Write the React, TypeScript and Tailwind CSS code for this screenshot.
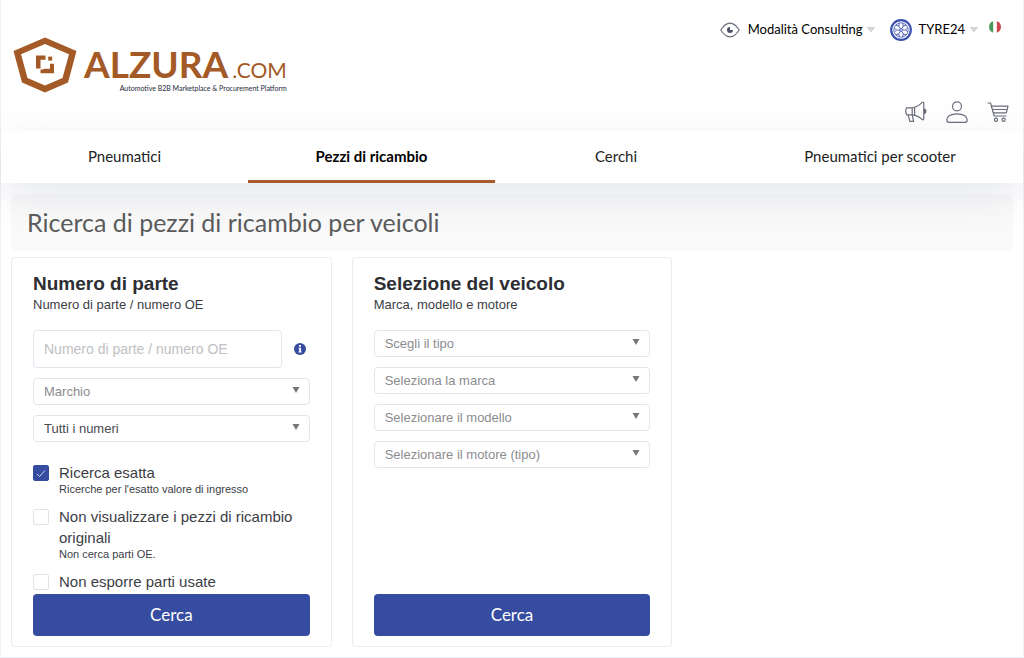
import React, { useState } from 'react';

const tabs = [
    { label: 'Pneumatici', active: false },
    { label: 'Pezzi di ricambio', active: true },
    { label: 'Cerchi', active: false },
    { label: 'Pneumatici per scooter', active: false },
];

const vehicleSelects = ['Scegli il tipo', 'Seleziona la marca', 'Selezionare il modello', 'Selezionare il motore (tipo)'];

function Logo() {
    return (
        <a href="#" className="flex items-start text-[#a35a26]">
            <svg viewBox="0 0 64 56" className="w-16 h-14 shrink-0" fill="currentColor">
                <path
                    fillRule="evenodd"
                    d="M32 0.5 L63.5 14 L55 45.5 L32 55.5 L9 45.5 L0.5 14 Z M32 7 L8 17.2 L14.5 41 L32 48.5 L49.5 41 L56 17.2 Z"
                />
                <path d="M23 18.5 H32.5 V22.8 H27.5 V31.5 H23 Z" />
                <path d="M35.2 19.6 H39.2 V23.6 H35.2 Z" />
                <path d="M27.5 32.5 H30.5 V31.8 H37 V26.8 H41 V36.3 H27.5 Z" />
            </svg>
            <div className="pl-[7px] pt-[13px]">
                <div className="flex items-baseline leading-7">
                    <span className="text-[37px] font-bold">ALZURA</span>
                    <span className="pl-1 text-[21px]">.COM</span>
                </div>
                <div className="text-right text-[7px] leading-2 text-gray-800">
                    Automotive B2B Marketplace &amp; Procurement Platform
                </div>
            </div>
        </a>
    );
}

function Caret() {
    return (
        <svg viewBox="0 0 10 6" className="w-2.5 h-1.5" fill="#d4d4d8">
            <path d="M0.5 0 H9.5 L5 5.5 Z" />
        </svg>
    );
}

function EyeIcon() {
    return (
        <svg viewBox="0 0 20 16" className="w-5 h-4" fill="none" stroke="#6b6d7c" strokeWidth="1.2">
            <path d="M0.8 8 C4 3 7 1.2 10 1.2 S16 3 19.2 8 C16 13 13 14.8 10 14.8 S4 13 0.8 8 Z" />
            <path d="M10 5 A3 3 0 1 0 13 8 L10 8 Z" fill="#4b4f6b" stroke="none" />
        </svg>
    );
}

function WheelIcon() {
    return (
        <svg viewBox="0 0 22 22" className="w-[22px] h-[22px]" fill="none" stroke="#3a50b0">
            <circle cx="11" cy="11" r="9.8" strokeWidth="2.2" />
            <circle cx="11" cy="11" r="7.2" strokeWidth="0.8" />
            <circle cx="11" cy="11" r="1.4" strokeWidth="0.9" />
            {[30, 90, 150, 210, 270, 330].map((angle) => (
                <path key={angle} d="M11 9.6 V6.6 L9 4.2 M11 6.6 L13 4.2" strokeWidth="0.8" transform={`rotate(${angle} 11 11)`} />
            ))}
        </svg>
    );
}

function FlagIcon() {
    return (
        <svg viewBox="0 0 12 12" className="w-3 h-3">
            <path d="M4.2 0.3 A6 6 0 0 0 4.2 11.7 Z" fill="#4a9a5c" />
            <path d="M7.8 0.3 A6 6 0 0 1 7.8 11.7 Z" fill="#d0454c" />
        </svg>
    );
}

function MegaphoneIcon() {
    return (
        <svg viewBox="0 0 22 22" className="w-[22px] h-[22px]" fill="none" stroke="#6b6d7c" strokeWidth="1.2" strokeLinejoin="round">
            <path d="M1.6 6.8 H7.2 V13.8 H1.6 C0.6 11.8 0.6 8.8 1.6 6.8 Z" />
            <path d="M7.2 6.8 C11.5 6.3 14.5 4 17 1.6 C18.2 0.8 18.8 1.2 18.8 2.4 V17.6 C18.8 18.8 18.2 19.2 17 18.3 C14.5 15.8 11.5 14.3 7.2 13.8" />
            <path d="M3.2 13.8 L4.8 20.3 H8.6 L7.2 13.8 M9.6 6.5 V14.1" />
            <path d="M18.8 8 C21.6 8.2 21.6 12.2 18.8 12.4" fill="#6b6d7c" />
        </svg>
    );
}

function UserIcon() {
    return (
        <svg viewBox="0 0 22 22" className="w-[22px] h-[22px]" fill="none" stroke="#6b6d7c" strokeWidth="1.2">
            <circle cx="11" cy="5.3" r="4.5" />
            <path d="M0.8 19 C0.8 15.5 4.5 12.8 11 12.8 S21.2 15.5 21.2 19 C21.2 20.6 20.5 21.3 19 21.3 H3 C1.5 21.3 0.8 20.6 0.8 19 Z" />
        </svg>
    );
}

function CartIcon() {
    return (
        <svg viewBox="0 0 22 20" className="w-[22px] h-5" fill="none" stroke="#6b6d7c" strokeWidth="1.2" strokeLinejoin="round">
            <path d="M0.5 1 H3.5 L7.2 14 H19.5" />
            <path d="M4.5 4.2 H21 L19.3 10.8 H6.3 M5.3 7.5 H20" />
            <circle cx="9" cy="17.7" r="1.6" />
            <circle cx="16.6" cy="17.7" r="1.6" />
        </svg>
    );
}

function SelectField({ label, dark = false }: { label: string; dark?: boolean }) {
    return (
        <div className="relative">
            <select
                aria-label={label}
                className={`block w-full h-[27px] appearance-none rounded border border-[#e4e4ee] bg-white pl-2.5 pr-7 text-[13px] ${dark ? 'text-[#4a4a4f]' : 'text-[#8c8c90]'}`}
            >
                <option>{label}</option>
            </select>
            <svg viewBox="0 0 8 6" className="pointer-events-none absolute right-2.5 top-[9px] w-2 h-1.5" fill="#777">
                <path d="M0.5 0 H7.5 L4 6 Z" />
            </svg>
        </div>
    );
}

function CheckOption({ label, hint, defaultChecked = false }: { label: string; hint?: string; defaultChecked?: boolean }) {
    const [checked, setChecked] = useState(defaultChecked);

    return (
        <label className="flex items-start gap-2.5 text-[#3c3e46]">
            <span className="relative mt-[3px] block w-4 h-4 shrink-0">
                <input
                    type="checkbox"
                    checked={checked}
                    onChange={(e) => setChecked(e.target.checked)}
                    className="block w-4 h-4 appearance-none rounded-xs border border-[#e2e2ea] bg-white checked:border-[#364ca0] checked:bg-[#364ca0]"
                />
                {checked && (
                    <svg viewBox="0 0 16 16" className="pointer-events-none absolute inset-0" fill="none" stroke="#cfd6f5">
                        <path d="M4 9 L6.5 11.5 L12 5.5" />
                    </svg>
                )}
            </span>
            <span className="block">
                <span className="block text-[15px] leading-[21px]">{label}</span>
                {hint && <span className="block text-[11px] leading-[13px]">{hint}</span>}
            </span>
        </label>
    );
}

function Card({ title, subtitle, children }: { title: string; subtitle: string; children: React.ReactNode }) {
    return (
        <section className="flex flex-col rounded border border-[#ebebef] bg-white px-[21px] pt-3.5 pb-2.5">
            <h2 className="text-[19px] leading-6 font-bold text-[#2d2e33]">{title}</h2>
            <p className="mb-4 text-[13px] leading-[18px] text-[#3c3e46]">{subtitle}</p>
            {children}
            <button className="mt-auto h-[42px] shrink-0 rounded bg-[#364ca0] font-[Lato,sans-serif] text-[17px] text-white">
                Cerca
            </button>
        </section>
    );
}

export default function App() {
    return (
        <div className="min-h-screen bg-white font-['Liberation_Sans',Arial,sans-serif]">
            <div className="border-x border-b border-[#eef0f5] pb-2.5">
                {/* Header */}
                <header className="flex justify-between pl-3 pr-3.5 h-[131px] font-[Lato,sans-serif]">
                    <div className="pt-[37px]">
                        <Logo />
                    </div>
                    <div className="flex flex-col items-end justify-between pt-[19px] pb-2">
                        <div className="flex items-center text-[13px] text-black">
                            <button className="flex items-center">
                                <EyeIcon />
                                <span className="pl-2 pr-1">Modalità Consulting</span>
                                <Caret />
                            </button>
                            <button className="flex items-center pl-3.5">
                                <WheelIcon />
                                <span className="pl-1.5 pr-1">TYRE24</span>
                                <Caret />
                            </button>
                            <button aria-label="Italiano" className="pl-2.5 pr-2 pb-1.5">
                                <FlagIcon />
                            </button>
                        </div>
                        <div className="flex items-center gap-[19px]">
                            <button aria-label="Novità"><MegaphoneIcon /></button>
                            <button aria-label="Profilo"><UserIcon /></button>
                            <button aria-label="Carrello"><CartIcon /></button>
                        </div>
                    </div>
                </header>

                {/* Tabs */}
                <nav className="relative z-10 grid grid-cols-[247fr_247fr_242fr_286fr] bg-white font-[Lato,sans-serif] text-[15px] text-[#222] shadow-[0_12px_44px_-4px_rgba(70,84,120,0.17)]">
                    {tabs.map((tab) => (
                        <a
                            key={tab.label}
                            href="#"
                            className={`flex h-[52px] items-center justify-center border-b-3 pt-0.5 ${tab.active ? 'border-[#a85a28] font-bold text-black' : 'border-transparent'}`}
                        >
                            {tab.label}
                        </a>
                    ))}
                </nav>

                {/* Search */}
                <main className="px-2.5 pt-[11px]">
                    <h1 className="rounded bg-[#fafafa] px-4 pb-px font-[Lato,sans-serif] text-[25px] leading-14 text-[#5c5c5c]">
                        Ricerca di pezzi di ricambio per veicoli
                    </h1>
                    <div className="mt-1.5 grid grid-cols-3 gap-5">
                        <Card title="Numero di parte" subtitle="Numero di parte / numero OE">
                            <div className="flex flex-col gap-2.5">
                                <div className="flex items-center">
                                    <input
                                        type="text"
                                        aria-label="Numero di parte / numero OE"
                                        placeholder="Numero di parte / numero OE"
                                        className="h-[38px] min-w-0 flex-1 rounded border border-[#e4e4ee] px-2.5 text-sm text-[#3c3e46] placeholder:text-[#c0c0c4]"
                                    />
                                    <svg viewBox="0 0 12 12" className="ml-3 mr-1 w-3 h-3">
                                        <circle cx="6" cy="6" r="6" fill="#364ca0" />
                                        <path d="M5 2 H7 V3.8 H5 Z M4.5 4.8 H7 V8.5 H7.7 V9.6 H4.4 V8.5 H5.2 V5.8 H4.5 Z" fill="#fff" />
                                    </svg>
                                </div>
                                <SelectField label="Marchio" />
                                <SelectField label="Tutti i numeri" dark />
                            </div>
                            <div className="mt-5 mb-0.5 flex flex-col gap-2.5">
                                <CheckOption label="Ricerca esatta" hint="Ricerche per l'esatto valore di ingresso" defaultChecked />
                                <CheckOption label="Non visualizzare i pezzi di ricambio originali" hint="Non cerca parti OE." />
                                <CheckOption label="Non esporre parti usate" />
                            </div>
                        </Card>
                        <Card title="Selezione del veicolo" subtitle="Marca, modello e motore">
                            <div className="flex flex-col gap-2.5">
                                {vehicleSelects.map((label) => (
                                    <SelectField key={label} label={label} />
                                ))}
                            </div>
                        </Card>
                    </div>
                </main>
            </div>
        </div>
    );
}
